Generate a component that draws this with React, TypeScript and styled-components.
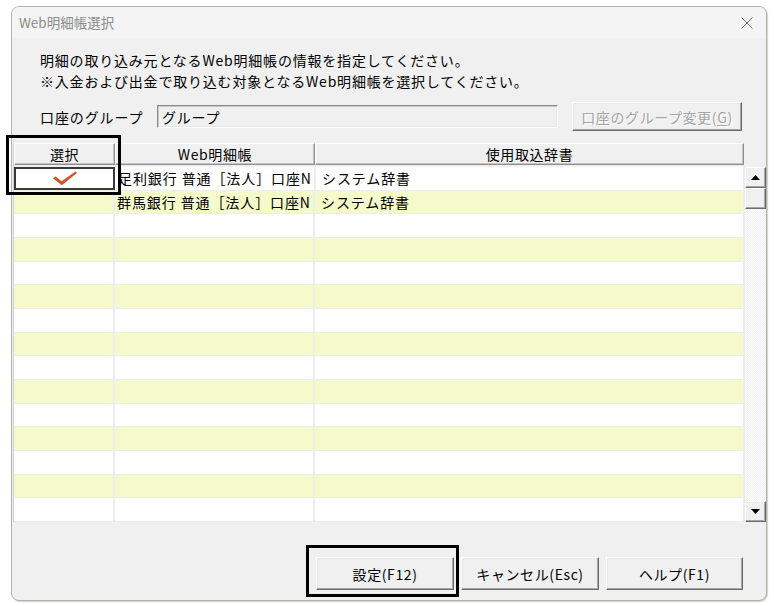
import React from 'react';
import styled, { createGlobalStyle } from 'styled-components';

const GlobalStyle = createGlobalStyle`
  html, body {
    margin: 0;
    padding: 0;
    background: #ffffff;
  }
  body {
    font-family: "Noto Sans CJK JP", "Liberation Sans", sans-serif;
    color: #000;
  }
  * {
    box-sizing: border-box;
  }
`;

const Page = styled.div`
  position: relative;
  width: 774px;
  height: 606px;
  padding: 6px 0 0 11px;
  background: #fff;
`;

const Window = styled.div`
  width: 756px;
  height: 595px;
  border: 1px solid #b2b2b2;
  border-radius: 8px;
  background: #f0f0f0;
  display: flex;
  flex-direction: column;
  overflow: hidden;
  box-shadow: 1px 1px 1px rgba(120, 140, 60, 0.35);
`;

const TitleBar = styled.div`
  height: 31px;
  flex-shrink: 0;
  display: flex;
  align-items: center;
  justify-content: space-between;
  padding: 0 13px 0 7px;
  background: #f4f4f4;
`;

const Title = styled.span`
  font-size: 13.5px;
  color: #8c8c8c;
  line-height: 1;
`;

const Messages = styled.div`
  margin-top: 12px;
  padding-left: 28px;
  font-size: 14px;
  line-height: 21px;
  letter-spacing: 0.8px;
`;

const GroupRow = styled.div`
  margin-top: 10px;
  height: 29px;
  display: flex;
  align-items: center;
  padding-left: 28px;
`;

const GroupLabel = styled.span`
  width: 117px;
  font-size: 14px;
  letter-spacing: 0.9px;
  line-height: 1;
`;

const ReadOnlyField = styled.div`
  width: 401px;
  height: 23px;
  display: flex;
  align-items: center;
  padding-left: 4px;
  font-size: 14px;
  letter-spacing: 0.8px;
  background: #f0f0f0;
  border: 1px solid;
  border-color: #8a8a8a #ffffff #ffffff #8a8a8a;
  box-shadow: inset 1px 1px 0 #c8c8c8, inset -1px -1px 0 #e6e6e6;
`;

const Button = styled.button<{ $width: number; $height: number; $disabled?: boolean }>`
  width: ${p => p.$width}px;
  height: ${p => p.$height}px;
  padding: 0;
  background: #f0f0f0;
  font-family: inherit;
  font-size: 14px;
  letter-spacing: 0.6px;
  line-height: 1;
  color: ${p => (p.$disabled ? '#a3a3a3' : '#000')};
  text-shadow: ${p => (p.$disabled ? '1px 1px 0 #ffffff' : 'none')};
  border: 1px solid;
  border-color: #ffffff #6b6b6b #6b6b6b #ffffff;
  box-shadow: inset -1px -1px 0 #a6a6a6, inset 1px 1px 0 #e8e8e8;
  cursor: default;

  u {
    text-decoration-thickness: 1px;
    text-underline-offset: 2px;
  }
`;

const GroupButton = styled(Button)`
  margin-left: 14px;
`;

const List = styled.div`
  margin: 12px 0 0 1px;
  display: flex;
  flex-direction: column;
  border-left: 1px solid #cfcfcf;
`;

const HeaderRow = styled.div`
  height: 22px;
  display: flex;
  margin-right: 22px;
  margin-bottom: 2px;
`;

const HeaderCell = styled.div<{ $width?: number }>`
  ${p => (p.$width ? `width: ${p.$width}px; flex-shrink: 0;` : 'flex: 1;')}
  display: flex;
  align-items: center;
  justify-content: center;
  font-size: 14px;
  letter-spacing: 0.6px;
  line-height: 1;
  background: #f0f0f0;
  border: 1px solid;
  border-color: #ffffff #8e8e8e #8e8e8e #ffffff;
  box-shadow: inset -1px -1px 0 #c4c4c4;
`;

const Body = styled.div`
  height: 355px;
  display: flex;
`;

const Rows = styled.div`
  flex: 1;
  display: flex;
  flex-direction: column;
`;

const Row = styled.div<{ $alt: boolean }>`
  flex: 1;
  display: flex;
  background: ${p => (p.$alt ? '#f4fac9' : '#ffffff')};
  border-bottom: 1px solid #ededed;
`;

const Cell = styled.div<{ $width?: number; $focused?: boolean }>`
  ${p => (p.$width ? `width: ${p.$width}px; flex-shrink: 0;` : 'flex: 1;')}
  position: relative;
  display: flex;
  align-items: center;
  justify-content: ${p => (p.$focused ? 'center' : 'flex-start')};
  padding-left: ${p => (p.$focused ? 0 : 2)}px;
  font-size: 14px;
  letter-spacing: 0.9px;
  line-height: 1;
  white-space: nowrap;
  overflow: hidden;
  border-right: 2px solid #ededed;
  ${p =>
    p.$focused &&
    `
    background: #ffffff;
    border: 2px solid #3a3a3a;
    margin: 0 1px 0 0;
  `}
`;

const ScrollBar = styled.div`
  width: 21px;
  display: flex;
  flex-direction: column;
  background: repeating-conic-gradient(#f2f2f2 0 25%, #fdfdfd 0 50%) 0 0 / 2px 2px;
`;

const ScrollButton = styled.div<{ $height: number }>`
  height: ${p => p.$height}px;
  display: flex;
  align-items: center;
  justify-content: center;
  background: #f0f0f0;
  border: 1px solid;
  border-color: #ffffff #6b6b6b #6b6b6b #ffffff;
  box-shadow: inset -1px -1px 0 #a6a6a6;
`;

const Track = styled.div`
  flex: 1;
`;

const Footer = styled.div`
  flex: 1;
  display: flex;
  justify-content: flex-end;
  align-items: flex-end;
  gap: 7px;
  padding: 0 23px 10px 0;
`;

const Highlight = styled.div<{ $x: number; $y: number; $w: number; $h: number }>`
  position: absolute;
  left: ${p => p.$x}px;
  top: ${p => p.$y}px;
  width: ${p => p.$w}px;
  height: ${p => p.$h}px;
  border: 3px solid #000;
  pointer-events: none;
`;

const CloseIcon = () => (
  <svg width="12" height="12" viewBox="0 0 12 12">
    <path d="M0.5 0.5 L11.5 11.5 M11.5 0.5 L0.5 11.5" stroke="#6d6d6d" strokeWidth="1" fill="none" />
  </svg>
);

const CheckMark = () => (
  <svg width="26" height="15" viewBox="0 0 26 15">
    <path d="M1 7.2 L3.6 5.6 L9.6 10.2 L23.4 0.6 L25 2 L9.8 14.2 Z" fill="#d5532c" />
  </svg>
);

const Arrow = ({ up }: { up: boolean }) => (
  <svg width="9" height="5" viewBox="0 0 9 5">
    <path d={up ? 'M0 5 L4.5 0 L9 5 Z' : 'M0 0 L4.5 5 L9 0 Z'} fill="#000" />
  </svg>
);

type Entry = { selected: boolean; book: string; dict: string };

const entries: Entry[] = [
  { selected: true, book: '足利銀行 普通［法人］口座N', dict: 'システム辞書' },
  { selected: false, book: '群馬銀行 普通［法人］口座N', dict: 'システム辞書' },
];

const ROW_COUNT = 15;

export default function App() {
  const rows = Array.from({ length: ROW_COUNT }, (_, i) => entries[i]);

  return (
    <Page>
      <GlobalStyle />
      <Window>
        <TitleBar>
          <Title>Web明細帳選択</Title>
          <CloseIcon />
        </TitleBar>

        <Messages>
          <div>明細の取り込み元となるWeb明細帳の情報を指定してください。</div>
          <div>※入金および出金で取り込む対象となるWeb明細帳を選択してください。</div>
        </Messages>

        <GroupRow>
          <GroupLabel>口座のグループ</GroupLabel>
          <ReadOnlyField>グループ</ReadOnlyField>
          <GroupButton $width={170} $height={29} $disabled>
            口座のグループ変更(<u>G</u>)
          </GroupButton>
        </GroupRow>

        <List>
          <HeaderRow>
            <HeaderCell $width={101}>選択</HeaderCell>
            <HeaderCell $width={200}>Web明細帳</HeaderCell>
            <HeaderCell>使用取込辞書</HeaderCell>
          </HeaderRow>
          <Body>
            <Rows>
              {rows.map((entry, i) => (
                <Row key={i} $alt={i % 2 === 1}>
                  <Cell $width={101} $focused={i === 0}>
                    {entry?.selected && <CheckMark />}
                  </Cell>
                  <Cell $width={200}>{entry?.book}</Cell>
                  <Cell>{entry?.dict && `\u00a0${entry.dict}`}</Cell>
                </Row>
              ))}
            </Rows>
            <ScrollBar>
              <ScrollButton $height={21}>
                <Arrow up />
              </ScrollButton>
              <ScrollButton $height={21} />
              <Track />
              <ScrollButton $height={21}>
                <Arrow up={false} />
              </ScrollButton>
            </ScrollBar>
          </Body>
        </List>

        <Footer>
          <Button $width={138} $height={33}>設定(F12)</Button>
          <Button $width={138} $height={33}>キャンセル(Esc)</Button>
          <Button $width={137} $height={33}>ヘルプ(F1)</Button>
        </Footer>
      </Window>

      <Highlight $x={6} $y={135} $w={115} $h={60} />
      <Highlight $x={306} $y={545} $w={153} $h={52} />
    </Page>
  );
}
